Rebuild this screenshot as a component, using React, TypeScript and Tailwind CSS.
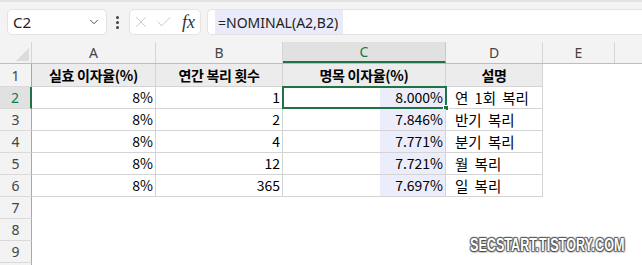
import { ChevronDown, X, Check } from 'lucide-react'

type Row = {
  num: number
  a: string
  b: string
  c: string
  d: string
}

const rows: Row[] = [
  { num: 2, a: '8%', b: '1', c: '8.000%', d: '연 1회 복리' },
  { num: 3, a: '8%', b: '2', c: '7.846%', d: '반기 복리' },
  { num: 4, a: '8%', b: '4', c: '7.771%', d: '분기 복리' },
  { num: 5, a: '8%', b: '12', c: '7.721%', d: '월 복리' },
  { num: 6, a: '8%', b: '365', c: '7.697%', d: '일 복리' },
]

const cols = [
  { key: 'A', w: 'w-[124px]' },
  { key: 'B', w: 'w-[127px]' },
  { key: 'C', w: 'w-[163px]' },
  { key: 'D', w: 'w-[97px]' },
  { key: 'E', w: 'w-[72px]' },
]

function RowHead({ n, active, tall }: { n?: number; active?: boolean; tall?: boolean }) {
  return (
    <div
      className={`flex shrink-0 items-center justify-center border-b border-[#dadada] w-[32px] font-['Noto_Sans',sans-serif] text-[14px] ${
        tall ? 'h-[23px]' : 'h-[22px]'
      } ${active ? 'bg-[#e1e1e1] text-[#107c41] border-r-2 border-r-[#217346]' : 'bg-[#f3f3f3] text-[#444] border-r border-r-[#a8a8a8]'}`}
    >
      {n}
    </div>
  )
}

export default function App() {
  return (
    <div className="relative h-[265px] w-[642px] overflow-hidden bg-white font-['Noto_Sans_CJK_KR',sans-serif] text-black">
      {/* formula bar */}
      <div className="h-[42px] border-t-2 border-[#e3e3e3] bg-[#f3f3f3]">
        <div className="flex items-start pt-[7px]">
          <div className="ml-[7px] flex h-[26px] w-[100px] items-center justify-between rounded-[5px] border border-[#e3e3e3] bg-white pl-[5px] pr-[5px]">
            <span className="font-['Noto_Sans',sans-serif] text-[15px] text-[#222]">C2</span>
            <ChevronDown size={14} strokeWidth={1.6} className="text-[#444]" />
          </div>
          <div className="ml-[9px] flex h-[26px] w-[3px] flex-col items-center justify-center gap-[2px]">
            <span className="h-[3px] w-[3px] rounded-full bg-[#444]" />
            <span className="h-[3px] w-[3px] rounded-full bg-[#444]" />
            <span className="h-[3px] w-[3px] rounded-full bg-[#444]" />
          </div>
          <div className="ml-[10px] flex h-[26px] w-[72px] items-center rounded-[5px] border border-[#e3e3e3] bg-white pl-[2px]">
            <X size={18} strokeWidth={1} className="text-[#b8b8b8]" />
            <Check size={18} strokeWidth={1} className="ml-[5px] text-[#b8b8b8]" />
            <span className="ml-[9px] font-['Liberation_Serif',serif] text-[18px] italic leading-none text-[#333]">fx</span>
          </div>
          <div className="ml-[6px] flex h-[26px] flex-1 items-start rounded-l-[5px] border border-r-0 border-[#e3e3e3] bg-white pl-[7px]">
            <span className="flex h-[24px] items-center bg-[#e9ebfb] pl-[3px] pr-[5px] font-['Noto_Sans',sans-serif] text-[14px] text-[#222]">
              =NOMINAL(A2,B2)
            </span>
          </div>
        </div>
      </div>

      {/* column headers */}
      <div className="flex h-[22px] border-b border-[#bdbdbd] bg-[#f3f3f3] font-['Noto_Sans',sans-serif] text-[14px] text-[#444]">
        <div className="relative w-[32px] shrink-0 border-r border-[#d5d5d5]">
          <div className="absolute bottom-[2px] right-[2px] h-0 w-0 border-b-[13px] border-l-[13px] border-b-[#dcdcdc] border-l-transparent" />
        </div>
        {cols.map((c) =>
          c.key === 'C' ? (
            <div
              key={c.key}
              className={`${c.w} flex shrink-0 items-center justify-center border-b-2 border-r border-b-[#217346] border-r-[#c8c8c8] bg-[#e1e1e1] text-[#107c41]`}
            >
              {c.key}
            </div>
          ) : (
            <div key={c.key} className={`${c.w} flex shrink-0 items-center justify-center border-r border-[#d5d5d5]`}>
              {c.key}
            </div>
          ),
        )}
        <div className="flex-1" />
      </div>

      {/* row 1: table header */}
      <div className="flex">
        <RowHead n={1} tall />
        {['실효 이자율(%)', '연간 복리 횟수', '명목 이자율(%)', '설명'].map((t, i) => (
          <div
            key={t}
            className={`${cols[i].w} flex h-[23px] shrink-0 items-center justify-center border-b border-r border-[#d4d4d4] bg-[#ececec] text-[14px] font-bold tracking-[-0.3px]`}
          >
            {t}
          </div>
        ))}
      </div>

      {/* data rows */}
      {rows.map((r) => (
        <div key={r.num} className="flex text-[14px]">
          <RowHead n={r.num} active={r.num === 2} />
          <div className="flex h-[22px] w-[124px] shrink-0 items-center justify-end border-b border-r border-[#d4d4d4] pr-[2px]">
            {r.a}
          </div>
          <div className="flex h-[22px] w-[127px] shrink-0 items-center justify-end border-b border-r border-[#d4d4d4] pr-[2px]">
            {r.b}
          </div>
          <div className="relative flex h-[22px] w-[163px] shrink-0 justify-end border-b border-r border-[#d4d4d4]">
            <div className="flex h-full w-[65px] items-center justify-end bg-[#ecedfb] pr-[2px]">{r.c}</div>
            {r.num === 2 && (
              <div className="absolute -bottom-px -left-px -right-[2px] -top-px border-2 border-[#217346]">
                <div className="absolute -bottom-[4px] -right-[4px] h-[6px] w-[6px] border border-white bg-[#217346]" />
              </div>
            )}
          </div>
          <div className="flex h-[22px] w-[97px] shrink-0 items-center whitespace-nowrap border-b border-r border-[#d4d4d4] pl-[9px] text-[14.5px] [word-spacing:3px]">
            {r.d}
          </div>
        </div>
      ))}

      {/* empty rows */}
      {[7, 8, 9].map((n) => (
        <div key={n} className="flex">
          <RowHead n={n} />
        </div>
      ))}
      <div className="flex">
        <RowHead />
      </div>

      {/* watermark overlay */}
      <div className="absolute left-[470px] top-[236px] origin-left scale-x-[0.7] whitespace-nowrap font-['Liberation_Sans',sans-serif] text-[18px] font-bold leading-none text-white [text-shadow:0_0_2px_#444,1px_1px_2px_#444,-1px_-1px_1px_#666,1px_-1px_1px_#666,-1px_1px_1px_#666]">
        SECSTART.TISTORY.COM
      </div>
    </div>
  )
}
